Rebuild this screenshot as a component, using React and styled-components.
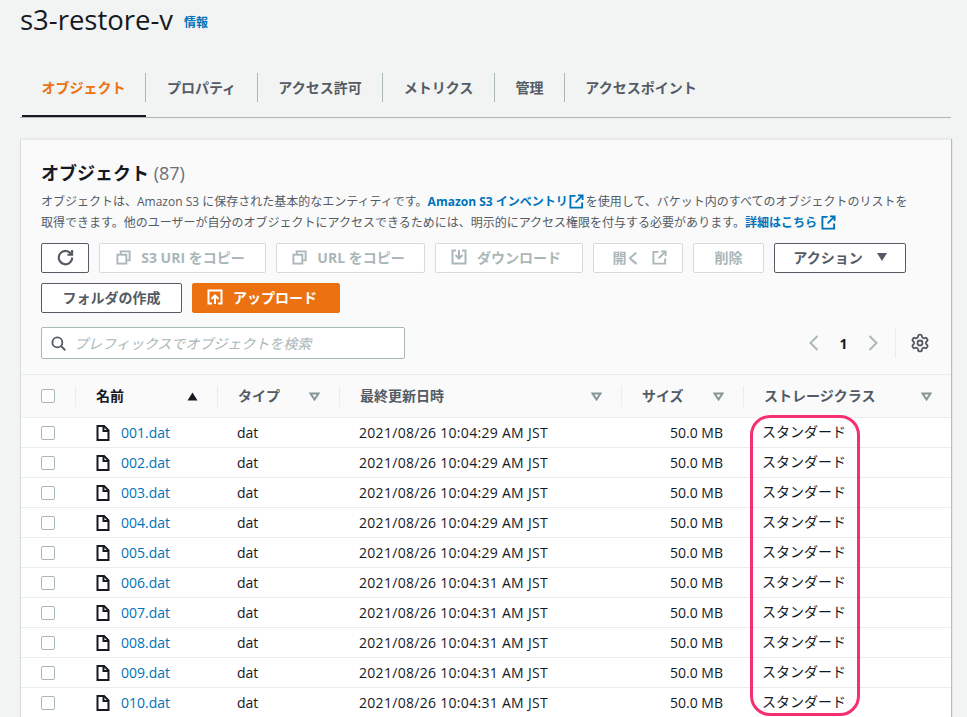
import React from "react";
import styled, { createGlobalStyle } from "styled-components";
import { Settings } from "lucide-react";

const GlobalStyle = createGlobalStyle`
  html, body {
    margin: 0;
    height: 717px;
    overflow: hidden;
    background: #f2f3f3;
  }
  body {
    font-family: "Open Sans", "Noto Sans CJK JP", sans-serif;
    color: #16191f;
  }
`;

const tabs = [
  { label: "オブジェクト", w: 124 },
  { label: "プロパティ", w: 112 },
  { label: "アクセス許可", w: 125 },
  { label: "メトリクス", w: 112 },
  { label: "管理", w: 70 },
  { label: "アクセスポイント", w: 152 },
];
const times = ["29", "29", "29", "29", "29", "31", "31", "31", "31", "31"];

const ExternalIcon = ({ color = "#0073bb" }) => (
  <LinkIconSvg width="15" height="15" viewBox="0 0 16 16" fill="none" stroke={color} strokeWidth="2">
    <path d="M7 2H1.5v12.5H14V9" />
    <path d="M9.5 1.5h5v5M14.5 1.5 7 9" />
  </LinkIconSvg>
);

const CopyIcon = () => (
  <IconSvg width="15" height="15" viewBox="0 0 16 16" fill="none" stroke="currentColor" strokeWidth="2">
    <path d="M5 5V1.5h9.5V11H11" />
    <rect x="1.5" y="5" width="9.5" height="9.5" />
  </IconSvg>
);

const DownloadIcon = () => (
  <IconSvg width="16" height="16" viewBox="0 0 16 16" fill="none" stroke="currentColor" strokeWidth="2">
    <path d="M5 1.5H1.5v13h13v-13H11" />
    <path d="M8 1v8M4.5 6 8 9.5 11.5 6" />
  </IconSvg>
);

const UploadIcon = () => (
  <IconSvg width="16" height="16" viewBox="0 0 16 16" fill="none" stroke="#fff" strokeWidth="2">
    <path d="M5 14.5H1.5v-13h13v13H11" />
    <path d="M8 15V7M4.5 10 8 6.5 11.5 10" />
  </IconSvg>
);

const RefreshIcon = () => (
  <IconSvg width="17" height="17" viewBox="0 0 16 16" fill="none" stroke="#545b64" strokeWidth="2">
    <path d="M13.6 5.2A6.3 6.3 0 1 0 14.3 8" />
    <path d="M14.2 1v4.4H9.8" />
  </IconSvg>
);

const SearchIcon = () => (
  <IconSvg width="15" height="15" viewBox="0 0 16 16" fill="none" stroke="#545b64" strokeWidth="2">
    <circle cx="6.8" cy="6.8" r="5.3" />
    <path d="m10.6 10.6 4.6 4.6" />
  </IconSvg>
);

const FileIcon = () => (
  <IconSvg width="16" height="16" viewBox="0 0 16 16" fill="none" stroke="#16191f" strokeWidth="2">
    <path d="M2.5 1h6.6l4.4 4.4V15h-11z" />
    <path d="M8.5 1v5h5" />
  </IconSvg>
);

const Chevron = ({ d }) => (
  <IconSvg width="10" height="16" viewBox="0 0 10 16" fill="none" stroke="#aab7b8" strokeWidth="2">
    <path d={d} />
  </IconSvg>
);

const SortIcon = ({ active }) => (
  <IconSvg width="11" height="9" viewBox="0 0 11 9">
    {active ? (
      <path d="M.5 8.5 5.5.5l5 8z" fill="#16191f" />
    ) : (
      <path d="M1.5 1.5h8l-4 6z" fill="none" stroke="#879596" strokeWidth="2" />
    )}
  </IconSvg>
);

const HeadCell = ({ label, active }) => (
  <HeaderCell>
    <HeaderLabel $active={active}>{label}</HeaderLabel>
    <SortIcon active={active} />
  </HeaderCell>
);

export default function App() {
  const rows = times.map((sec, i) => ({
    name: `${String(i + 1).padStart(3, "0")}.dat`,
    time: `2021/08/26 10:04:${sec} AM JST`,
  }));

  return (
    <Page>
      <GlobalStyle />
      <TitleRow>
        <Title>s3-restore-v</Title>
        <InfoLink>情報</InfoLink>
      </TitleRow>
      <TabBar>
        {tabs.map((t, i) => (
          <Tab key={t.label} $active={i === 0}>
            <TabLabel $w={t.w} $active={i === 0} $last={i === tabs.length - 1}>{t.label}</TabLabel>
          </Tab>
        ))}
      </TabBar>
      <Panel>
        <PanelHead>
          <Heading>
            オブジェクト <Count>(87)</Count>
          </Heading>
          <Desc>
            オブジェクトは、Amazon S3 に保存された基本的なエンティティです。
            <DescLink>Amazon S3 インベントリ<ExternalIcon /></DescLink>
            を使用して、バケット内のすべてのオブジェクトのリストを
            <br />
            取得できます。他のユーザーが自分のオブジェクトにアクセスできるためには、明示的にアクセス権限を付与する必要があります。
            <DescLink>詳細はこちら <ExternalIcon /></DescLink>
          </Desc>
          <Toolbar>
            <Button $w={48}><RefreshIcon /></Button>
            <Button $w={167} $right={4} disabled><CopyIcon />S3 URI をコピー</Button>
            <Button $w={149} $right={4} disabled><CopyIcon />URL をコピー</Button>
            <Button $w={148} $right={6} disabled><DownloadIcon />ダウンロード</Button>
            <Button $w={90} $left={5} disabled>開く<ExternalIcon color="#aab7b8" /></Button>
            <Button $w={71} disabled>削除</Button>
            <Button $w={132}>アクション<CaretDown /></Button>
          </Toolbar>
          <Toolbar>
            <Button $w={141}>フォルダの作成</Button>
            <Button $w={148} $right={8} $primary><UploadIcon />アップロード</Button>
          </Toolbar>
          <SearchRow>
            <SearchBox>
              <SearchIcon />
              <SearchInput placeholder="プレフィックスでオブジェクトを検索" />
            </SearchBox>
            <Pager>
              <Chevron d="M8.5 1 1.5 8l7 7" />
              <PageNo>1</PageNo>
              <Chevron d="M1.5 1l7 7-7 7" />
              <PagerDivider />
              <Settings size={20} color="#545b64" strokeWidth={2.2} />
            </Pager>
          </SearchRow>
        </PanelHead>
        <TableWrap>
          <HeaderRow>
            <CheckCell><Check /></CheckCell>
            <HeadCell label="名前" active />
            <HeadCell label="タイプ" />
            <HeadCell label="最終更新日時" />
            <HeadCell label="サイズ" />
            <HeadCell label="ストレージクラス" />
          </HeaderRow>
          {rows.map((r) => (
            <Row key={r.name}>
              <CheckCell><Check /></CheckCell>
              <NameCell><FileIcon /><FileLink>{r.name}</FileLink></NameCell>
              <Cell>dat</Cell>
              <DateCell>{r.time}</DateCell>
              <SizeCell>50.0 MB</SizeCell>
              <StorageCell>スタンダード</StorageCell>
            </Row>
          ))}
          <Highlight />
        </TableWrap>
      </Panel>
    </Page>
  );
}

const Page = styled.div`
  height: 717px;
  overflow: hidden;
  padding: 0 16px 0 20px;
  box-sizing: border-box;
`;

const IconSvg = styled.svg`
  flex: none;
`;

const LinkIconSvg = styled(IconSvg)`
  vertical-align: -3px;
  margin: 0 2px 0 1px;
`;

const TitleRow = styled.div`
  display: flex;
  align-items: flex-start;
  gap: 11px;
  height: 45px;
  margin-top: -3px;
`;

const Title = styled.h1`
  margin: 0;
  font-size: 27.5px;
  line-height: 45px;
  font-weight: 400;
`;

const InfoLink = styled.a`
  margin-top: 18px;
  font-size: 12px;
  line-height: 16px;
  font-weight: 700;
  color: #0073bb;
`;

const TabBar = styled.div`
  display: flex;
  margin-top: 24px;
  height: 52px;
  box-sizing: border-box;
  border-bottom: 1px solid #aab7b8;
`;

const Tab = styled.div`
  height: 51px;
  box-sizing: border-box;
  padding-top: 7px;
  border-bottom: 2px solid ${(p) => (p.$active ? "#16191f" : "transparent")};
  margin-left: ${(p) => (p.$active ? "2px" : "0")};
`;

const TabLabel = styled.span`
  display: flex;
  align-items: center;
  justify-content: center;
  width: ${(p) => p.$w}px;
  height: 29px;
  padding-bottom: 2px;
  box-sizing: border-box;
  font-size: 14px;
  font-weight: 700;
  color: ${(p) => (p.$active ? "#ec7211" : "#545b64")};
  border-right: ${(p) => (p.$last ? "none" : "1px solid #aab7b8")};
`;

const Panel = styled.section`
  margin-top: 21px;
  background: #fff;
  border-left: 1px solid #d5dbdb;
  border-top: 1px solid #eaeded;
  box-shadow: 1px 0 1px rgba(0, 28, 36, 0.25);
`;

const PanelHead = styled.div`
  background: #fafafa;
  padding: 20px 20px 16px 20px;
  height: 235px;
  box-sizing: border-box;
  border-bottom: 1px solid #eaeded;
`;

const Heading = styled.h2`
  margin: 0;
  font-size: 18px;
  line-height: 26px;
  font-weight: 700;
`;

const Count = styled.span`
  font-weight: 400;
  color: #687078;
`;

const Desc = styled.p`
  margin: 5px 0 0;
  font-size: 12px;
  line-height: 21px;
  color: #545b64;
  white-space: nowrap;
`;

const DescLink = styled.a`
  font-weight: 700;
  color: #0073bb;
`;

const Toolbar = styled.div`
  display: flex;
  gap: 10px;
  margin-top: 10px;
`;

const Button = styled.button`
  display: flex;
  align-items: center;
  justify-content: center;
  gap: 10px;
  width: ${(p) => p.$w}px;
  height: 30px;
  padding: 0 ${(p) => p.$right || 0}px 2px ${(p) => p.$left || 0}px;
  box-sizing: border-box;
  border-radius: 2px;
  font: 700 14px "Open Sans", "Noto Sans CJK JP", sans-serif;
  color: ${(p) => (p.$primary ? "#fff" : p.disabled ? "#aab7b8" : "#545b64")};
  background: ${(p) => (p.$primary ? "#ec7211" : "#fff")};
  border: 1px solid ${(p) => (p.$primary ? "#ec7211" : p.disabled ? "#d5dbdb" : "#545b64")};
`;

const CaretDown = styled.span`
  width: 0;
  height: 0;
  margin-left: 4px;
  border-left: 5.5px solid transparent;
  border-right: 5.5px solid transparent;
  border-top: 8px solid #545b64;
`;

const SearchRow = styled.div`
  display: flex;
  justify-content: space-between;
  align-items: center;
  margin-top: 14px;
`;

const SearchBox = styled.label`
  display: flex;
  align-items: center;
  gap: 8px;
  width: 364px;
  height: 32px;
  padding-left: 9px;
  box-sizing: border-box;
  background: #fff;
  border: 1px solid #aab7b8;
  border-radius: 2px;
`;

const SearchInput = styled.input`
  flex: 1;
  min-width: 0;
  border: none;
  outline: none;
  background: none;
  padding: 0;
  font: italic 14px "Open Sans", "Noto Sans CJK JP", sans-serif;
  &::placeholder {
    color: #aab7b8;
    opacity: 1;
  }
`;

const Pager = styled.div`
  display: flex;
  align-items: center;
  height: 30px;
  margin-right: 1px;
`;

const PageNo = styled.span`
  width: 49px;
  text-align: center;
  font-size: 14px;
  font-weight: 700;
`;

const PagerDivider = styled.span`
  width: 1px;
  height: 30px;
  margin: 0 14px 0 17px;
  background: #eaeded;
`;

const columns = "54px 142px 122px 282px 122px 1fr";

const HeaderRow = styled.div`
  display: grid;
  grid-template-columns: ${columns};
  height: 43px;
  align-items: center;
  background: #fafafa;
  border-bottom: 1px solid #eaeded;
  box-sizing: border-box;
`;

const HeaderCell = styled.div`
  display: flex;
  align-items: center;
  justify-content: space-between;
  height: 21px;
  padding: 0 19px 0 20px;
  box-sizing: border-box;
  border-left: 1px solid #eaeded;
`;

const HeaderLabel = styled.span`
  padding-bottom: 2px;
  font-size: 14px;
  font-weight: 700;
  color: ${(p) => (p.$active ? "#16191f" : "#545b64")};
`;

const Row = styled.div`
  display: grid;
  grid-template-columns: ${columns};
  height: 30px;
  align-items: center;
  background: #fff;
  border-bottom: 1px solid #eaeded;
  box-sizing: border-box;
`;

const CheckCell = styled.div`
  display: flex;
  padding-left: 20px;
`;

const Check = styled.span`
  width: 14px;
  height: 14px;
  box-sizing: border-box;
  background: #fff;
  border: 1px solid #aab7b8;
  border-radius: 2px;
`;

const Cell = styled.div`
  padding-left: 20px;
  font-size: 14px;
  white-space: nowrap;
`;

const NameCell = styled(Cell)`
  display: flex;
  align-items: center;
  gap: 10px;
`;

const DateCell = styled(Cell)`
  letter-spacing: 0.3px;
`;

const SizeCell = styled(Cell)`
  padding: 0 20px 0 0;
  text-align: right;
`;

const StorageCell = styled(Cell)`
  padding: 0 0 4px 19px;
`;

const FileLink = styled.a`
  color: #0073bb;
`;

const TableWrap = styled.div`
  position: relative;
`;

const Highlight = styled.div`
  position: absolute;
  left: 729px;
  top: 40px;
  width: 110px;
  height: 301px;
  box-sizing: border-box;
  border: 3px solid #f5306f;
  border-radius: 20px;
  pointer-events: none;
`;
